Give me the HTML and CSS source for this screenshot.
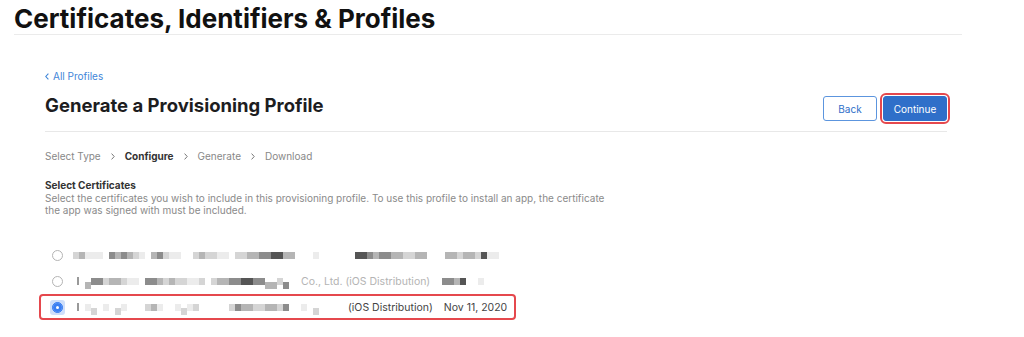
FILE: index.html
```html
<!DOCTYPE html>
<html lang="en">
<head>
    <meta charset="UTF-8">
    <title>Certificates, Identifiers &amp; Profiles</title>
    <link rel="stylesheet" href="styles.css">
</head>
<body>

<header class="top">
    <h1>Certificates, Identifiers &amp; Profiles</h1>
</header>

<main class="content">
    <a href="#" class="back-link">
        <svg width="4" height="7" viewBox="0 0 4 7"><path d="M3.4 0.6 L0.8 3.5 L3.4 6.4" fill="none" stroke="currentColor" stroke-width="1.1"/></svg>
        All Profiles
    </a>

    <div class="head-row">
        <h2>Generate a Provisioning Profile</h2>
        <div class="actions">
            <button class="btn btn-outline">Back</button>
            <button class="btn btn-primary marked">Continue</button>
        </div>
    </div>

    <ol class="steps">
        <li>Select Type</li>
        <li class="sep"><svg width="4" height="7" viewBox="0 0 4 7"><path d="M0.6 0.6 L3.2 3.5 L0.6 6.4" fill="none" stroke="currentColor" stroke-width="1"/></svg></li>
        <li class="current">Configure</li>
        <li class="sep"><svg width="4" height="7" viewBox="0 0 4 7"><path d="M0.6 0.6 L3.2 3.5 L0.6 6.4" fill="none" stroke="currentColor" stroke-width="1"/></svg></li>
        <li>Generate</li>
        <li class="sep"><svg width="4" height="7" viewBox="0 0 4 7"><path d="M0.6 0.6 L3.2 3.5 L0.6 6.4" fill="none" stroke="currentColor" stroke-width="1"/></svg></li>
        <li>Download</li>
    </ol>

    <section class="certs">
        <h3>Select Certificates</h3>
        <p>Select the certificates you wish to include in this provisioning profile. To use this profile to install an app, the certificate the app was signed with must be included.</p>

        <ul class="cert-list">
            <!-- names are pixelated in the source, kept as mosaic blocks -->
            <li class="cert-row">
                <span class="radio"></span>
                <span class="mz">
                    <i class="s2"></i><i class="s3"></i><i class="s1 w2"></i><i class="s1"></i><i class="s0"></i>
                    <i class="s4"></i><i class="s3"></i><i class="s4"></i><i class="s3"></i><i class="s2"></i><i class="s1"></i><i class="s0 w1"></i>
                    <i class="s3"></i><i class="s4"></i><i class="s2"></i><i class="s1 w2"></i><i class="s0 w2"></i>
                    <i class="s2"></i><i class="s3"></i><i class="s2 w2"></i><i class="s1 w2"></i><i class="s0"></i>
                    <i class="s2 w2"></i><i class="s3 w2"></i><i class="s4 w2"></i><i class="s5 w2"></i><i class="s3 w2"></i><i class="s0 w3"></i>
                    <i class="s1"></i><i class="s0 w6"></i>
                    <i class="s5 w2"></i><i class="s4"></i><i class="s3"></i><i class="s4 w2"></i><i class="s3 w2"></i><i class="s2 w2"></i><i class="s3 w2"></i><i class="s0 w3"></i>
                    <i class="s3 w2"></i><i class="s2"></i><i class="s3 w2"></i><i class="s2"></i><i class="s5"></i><i class="s1 w2"></i>
                </span>
            </li>
            <li class="cert-row">
                <span class="radio"></span>
                <span class="mz">
                    <i class="bar"></i>
                    <i class="s3 lo"></i><i class="s4"></i><i class="s4"></i><i class="s2"></i><i class="s3"></i><i class="s3"></i><i class="s2"></i><i class="s1"></i><i class="s1"></i><i class="s0"></i>
                    <i class="s4 w2"></i><i class="s3"></i><i class="s2"></i><i class="s3"></i><i class="s2 w2"></i><i class="s1 w2"></i><i class="s2"></i><i class="s0"></i>
                    <i class="s2"></i><i class="s3 w2"></i><i class="s4 w2"></i><i class="s5 w2"></i><i class="s4 w2"></i><i class="s3 lo w2"></i><i class="s2"></i><i class="s4 lo"></i>
                </span>
                <span class="faded">Co., Ltd. (iOS Distribution)</span>
                <span class="mz tail">
                    <i class="s4 w2"></i><i class="s3"></i><i class="s5"></i><i class="s0 w2"></i><i class="s1"></i>
                </span>
            </li>
            <li class="cert-row selected">
                <span class="focus"><span class="radio on"></span></span>
                <span class="mz">
                    <i class="bar"></i>
                    <i class="s1"></i><i class="s2 lo"></i><i class="s0"></i><i class="s1"></i><i class="s0"></i><i class="s2 lo"></i><i class="s1"></i><i class="s0 w3"></i>
                    <i class="s2"></i><i class="s3"></i><i class="s1"></i><i class="s0 w2"></i><i class="s1"></i><i class="s2 lo"></i><i class="s1"></i><i class="s2"></i><i class="s0 w5"></i>
                    <i class="s2"></i><i class="s4"></i><i class="s3 w2"></i><i class="s2 w2"></i><i class="s3 w2"></i><i class="s2"></i><i class="s4"></i><i class="s0 w2"></i>
                    <i class="s1"></i><i class="s0"></i><i class="s2 lo"></i>
                </span>
                <span class="type">(iOS Distribution)</span>
                <span class="date">Nov 11, 2020</span>
            </li>
        </ul>
    </section>
</main>

</body>
</html>
```

FILE: styles.css
```css
* { margin: 0; padding: 0; box-sizing: border-box; }
body {
    font-family: 'Inter', 'Noto Sans', sans-serif;
    font-size: 10px; color: #1d1d1f; background: #fff;
}

.top {
    width: 948px; margin-left: 14px;
    border-bottom: 1px solid #ebebeb;
}
.top h1 {
    font-size: 26px; font-weight: 700; line-height: 30px;
    padding-top: 4px; color: #111;
}

.content { width: 902px; margin-left: 45px; }

.back-link {
    display: flex; align-items: center; gap: 4px;
    margin-top: 34px; height: 14px;
    color: #3f86d8; text-decoration: none; font-size: 10px;
}

.head-row {
    display: flex; justify-content: space-between; align-items: flex-start;
    margin-top: 11px; padding-bottom: 10px;
    border-bottom: 1px solid #e8e8e8;
}
.head-row h2 {
    font-size: 18.5px; font-weight: 700; line-height: 23px; color: #1d1d1f;
}
.actions { display: flex; gap: 6px; margin-top: 2px; }
.btn {
    font-family: inherit; font-size: 10px; height: 25px;
    border-radius: 3px; cursor: pointer;
}
.btn-outline {
    width: 54px; background: #fff; color: #2f6fc9;
    border: 1px solid #5c95de;
}
.btn-primary {
    width: 64px; background: #2f6fc9; color: #fff;
    border: 1px solid #2f6fc9;
}
.marked { outline: 2px solid #e5484d; outline-offset: 1px; }

.steps {
    list-style: none; display: flex; align-items: center; gap: 10px;
    margin-top: 17px; height: 14px; color: #888;
}
.steps .current { color: #333; font-weight: 700; }
.steps .sep { display: flex; color: #777; }

.certs h3 {
    font-size: 10px; font-weight: 700; line-height: 13px;
    margin-top: 16px; color: #333;
}
.certs p {
    width: 565px; line-height: 12px; color: #8a8a8a;
}

.cert-list { list-style: none; margin: 26px 0 0 -6px; }
.cert-row {
    display: flex; align-items: center; width: fit-content;
    height: 26px; padding: 0 7px 0 11px;
    border: 2px solid transparent; border-radius: 4px;
    color: #444; font-size: 10.5px;
}
.cert-row.selected { border-color: #e5484d; }

.radio {
    width: 11px; height: 11px; border-radius: 50%;
    border: 1px solid #b4b4b4; background: #fff;
    margin-right: 10px; flex: none;
}
.focus {
    display: flex; padding: 2px; margin: -2px 8px -2px -2px;
    background: #cfdffa; border-radius: 3px;
}
.radio.on {
    margin-right: 0;
    background: #3b7ff2; border-color: #3b7ff2;
    box-shadow: inset 0 0 0 3px #3b7ff2, inset 0 0 0 5px #fff;
}

.mz { display: flex; align-items: center; height: 14px; }
.mz i { display: block; width: 6px; height: 7px; flex: none; }
.mz i.w1 { width: 6px; }
.mz i.w2 { width: 12px; }
.mz i.w3 { width: 18px; }
.mz i.w5 { width: 30px; }
.mz i.w6 { width: 36px; }
.mz i.lo { margin-top: 8px; }
.mz i.bar { width: 2px; height: 8px; background: #999; margin: 0 6px 0 4px; }
.s0 { background: transparent; }
.s1 { background: #ececec; }
.s2 { background: #d5d5d5; }
.s3 { background: #b5b5b5; }
.s4 { background: #8c8c8c; }
.s5 { background: #555; }

.faded { color: #b4b4b4; margin-left: 12px; }
.mz.tail { margin-left: 12px; }
.type { margin-left: 29px; }
.date { margin-left: 11px; }
```
